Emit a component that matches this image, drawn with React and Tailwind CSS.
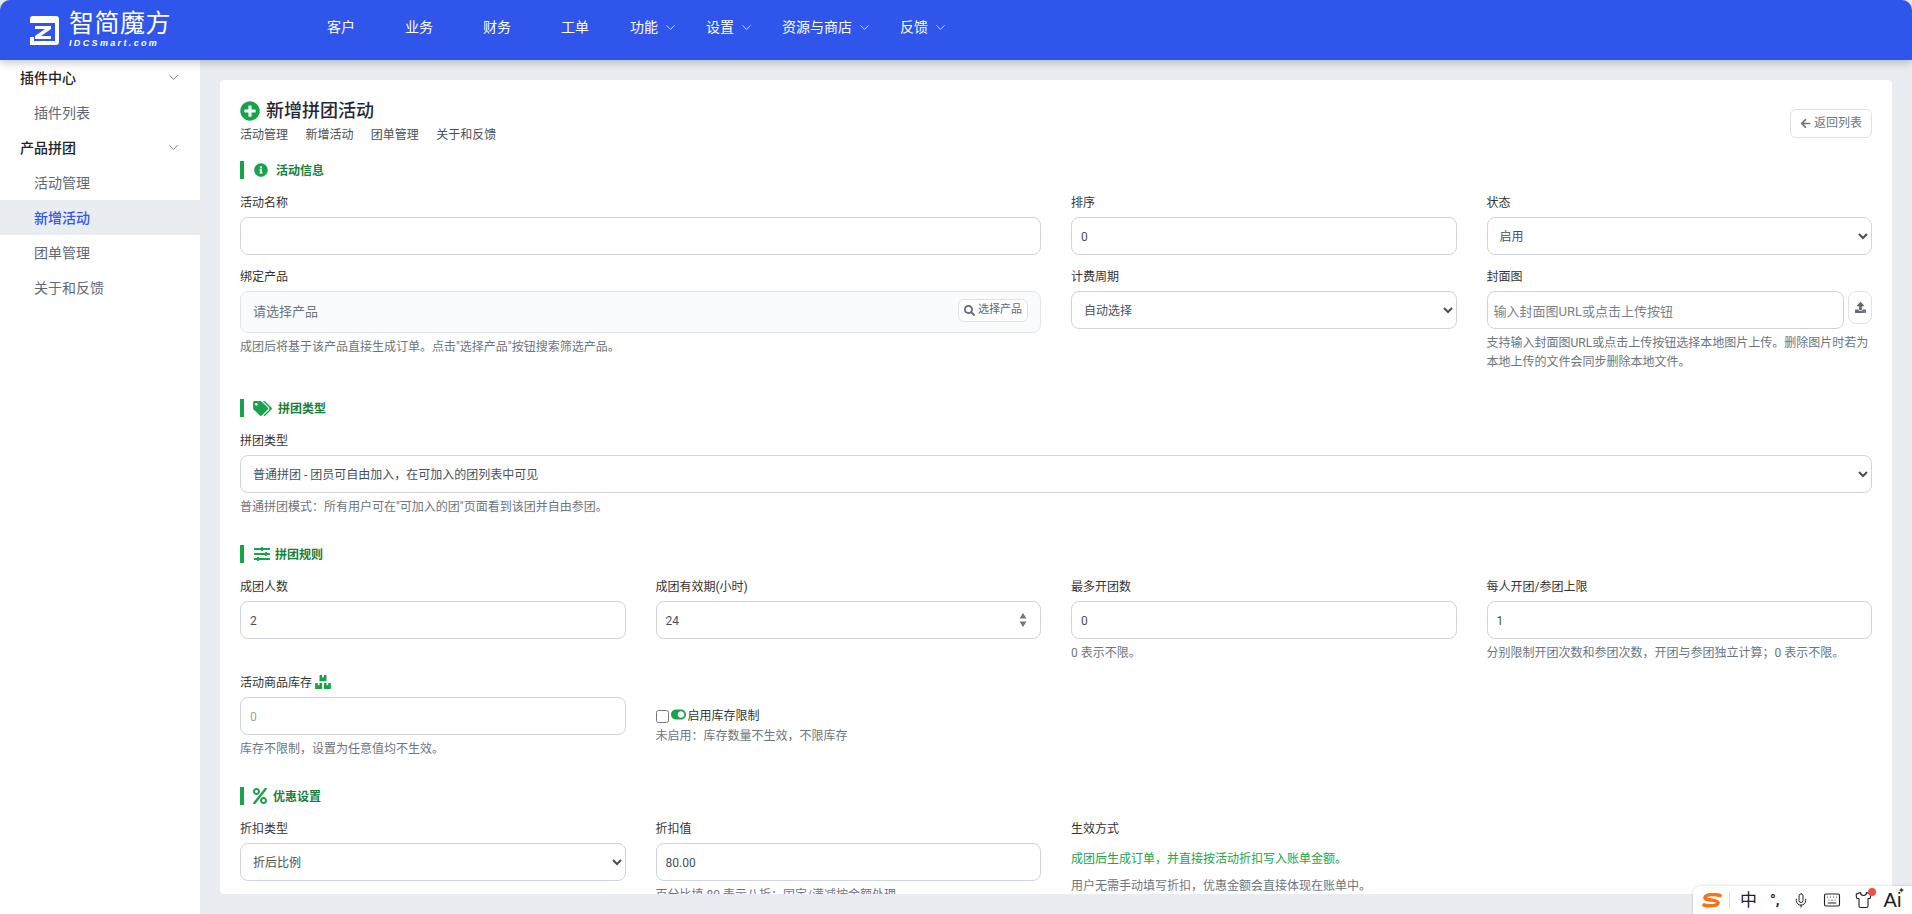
import React from "react";
import {
  FaPlusCircle,
  FaInfoCircle,
  FaTags,
  FaSlidersH,
  FaPercent,
  FaBoxes,
  FaToggleOn,
  FaSearch,
  FaArrowLeft,
  FaUpload,
} from "react-icons/fa";
import { ChevronDown, Mic, Keyboard, Shirt } from "lucide-react";

const inputCls =
  "block w-full h-[38px] rounded-[8px] border border-[#ced4da] bg-white px-[9px] pt-[2px] text-[12px] text-[#495057] outline-none placeholder:text-[#7b838a]";
const selectCls =
  "block w-full h-[38px] rounded-[8px] border border-[#ced4da] bg-white px-[8px] pt-[2px] text-[12px] text-[#495057] outline-none";

function Logo() {
  return (
    <div className="flex items-center w-[302px] pl-[30px] shrink-0">
      <svg width="29" height="29" viewBox="0 0 29 29">
        <rect width="29" height="29" rx="3" fill="#fff" />
        <path d="M0 7h25v18H4v-4h-4z" fill="#2f55eb" />
        <path d="M5 10h16v3L11 20h10v3H5v-3l10-7H5z" fill="#fff" />
        <path d="M0 21h4v8H0z" fill="#fff" />
      </svg>
      <div className="ml-[10px] text-white">
        <div className="text-[25px] leading-[24px] font-normal tracking-[0.5px]">智简魔方</div>
        <div className="text-[9px] leading-[10px] mt-[2px] font-bold italic tracking-[2.35px] font-['Liberation_Sans',sans-serif]">
          IDCSmart.com
        </div>
      </div>
    </div>
  );
}

function NavLink({ children }) {
  return <span className="px-[25px] text-[14px] text-white">{children}</span>;
}

function NavDrop({ children }) {
  return (
    <span className="flex items-center pl-[16px] pr-[12px] text-[14px] text-white">
      {children}
      <ChevronDown className="ml-[5px] w-[15px] h-[15px] text-white" strokeWidth={1.25} />
    </span>
  );
}

function Header() {
  return (
    <header className="relative z-10 flex items-center h-[60px] shrink-0 rounded-t-[10px] bg-[#2f55eb] shadow-[0_3px_8px_rgba(0,0,0,0.22)]">
      <Logo />
      <nav className="flex items-center -mt-[6px]">
        <NavLink>客户</NavLink>
        <NavLink>业务</NavLink>
        <NavLink>财务</NavLink>
        <NavLink>工单</NavLink>
        <NavDrop>功能</NavDrop>
        <NavDrop>设置</NavDrop>
        <NavDrop>资源与商店</NavDrop>
        <NavDrop>反馈</NavDrop>
      </nav>
    </header>
  );
}

function SideGroup({ children }) {
  return (
    <div className="flex items-center justify-between h-[35px] pl-[20px] pr-[19px] text-[14px] font-medium text-[#222]">
      <span className="pt-[2px]">{children}</span>
      <ChevronDown className="w-[15px] h-[15px] text-[#555]" strokeWidth={1.25} />
    </div>
  );
}

function SideItem({ children, active }) {
  if (active) {
    return (
      <div className="flex items-center h-[35px] pl-[34px] pt-[2px] text-[14px] font-medium bg-[#e9edf2] text-[#2f55eb]">
        {children}
      </div>
    );
  }
  return <div className="flex items-center h-[35px] pl-[34px] pt-[2px] text-[14px] text-[#5f6873]">{children}</div>;
}

function Sidebar() {
  return (
    <aside className="w-[200px] shrink-0 bg-white">
      <SideGroup>插件中心</SideGroup>
      <SideItem>插件列表</SideItem>
      <SideGroup>产品拼团</SideGroup>
      <SideItem>活动管理</SideItem>
      <SideItem active>新增活动</SideItem>
      <SideItem>团单管理</SideItem>
      <SideItem>关于和反馈</SideItem>
    </aside>
  );
}

function Section({ icon, gap, className, children }) {
  return (
    <div className={`flex items-center h-[18px] mb-[15px] border-l-4 border-[#16a34a] pl-[10px] text-[12px] font-bold text-[#15803d] ${className || ""}`}>
      <span className={`flex items-center text-[#16a34a] ${gap}`}>{icon}</span>
      <span className="pt-[2px]">{children}</span>
    </div>
  );
}

function Label({ children }) {
  return <label className="flex items-center gap-[3px] h-[18px] mb-[5px] text-[12px] leading-[18px] text-[#333]">{children}</label>;
}

function Hint({ children, className }) {
  return <p className={`mt-[5px] text-[12px] leading-[18px] text-[#6c757d] ${className || ""}`}>{children}</p>;
}

function ActivityInfo() {
  return (
    <div className="grid grid-cols-12 gap-x-[30px] gap-y-[13px]">
      <div className="col-span-6">
        <Label>活动名称</Label>
        <input className={inputCls} />
      </div>
      <div className="col-span-3">
        <Label>排序</Label>
        <input className={inputCls} defaultValue="0" />
      </div>
      <div className="col-span-3">
        <Label>状态</Label>
        <select className={selectCls}>
          <option>启用</option>
        </select>
      </div>
      <div className="col-span-6">
        <Label>绑定产品</Label>
        <div className="flex items-center justify-between h-[42px] rounded-[8px] border border-[#e3e7ec] bg-[#f9fbfd] pl-[12px] pr-[12px]">
          <span className="text-[13px] text-[#6c757d]">请选择产品</span>
          <button className="flex items-center gap-[3px] h-[23px] px-[5px] -mt-[4px] rounded-[6px] border border-[#dee2e6] bg-white text-[11px] text-[#5f6873]">
            <FaSearch className="w-[11px] h-[11px]" />
            选择产品
          </button>
        </div>
        <Hint>成团后将基于该产品直接生成订单。点击"选择产品"按钮搜索筛选产品。</Hint>
      </div>
      <div className="col-span-3">
        <Label>计费周期</Label>
        <select className={selectCls}>
          <option>自动选择</option>
        </select>
      </div>
      <div className="col-span-3">
        <Label>封面图</Label>
        <div className="flex items-start gap-[4px]">
          <input className="block flex-1 min-w-0 h-[38px] rounded-[8px] border border-[#ced4da] bg-white px-[6px] pt-[2px] text-[13px] outline-none placeholder:text-[#7b838a]" placeholder="输入封面图URL或点击上传按钮" />
          <button className="flex items-center justify-center w-[24px] h-[33px] rounded-[8px] border border-[#dee2e6] bg-white text-[#5f6873]">
            <FaUpload className="w-[11px] h-[11px]" />
          </button>
        </div>
        <Hint className="leading-[19px]">支持输入封面图URL或点击上传按钮选择本地图片上传。删除图片时若为本地上传的文件会同步删除本地文件。</Hint>
      </div>
    </div>
  );
}

function RuleFields() {
  return (
    <div className="grid grid-cols-12 gap-x-[30px] gap-y-[12px]">
      <div className="col-span-3">
        <Label>成团人数</Label>
        <input className={inputCls} defaultValue="2" />
      </div>
      <div className="col-span-3">
        <Label>成团有效期(小时)</Label>
        <div className="relative">
          <input className={inputCls} defaultValue="24" />
          <svg className="absolute right-[14px] top-[12px]" width="8" height="14" viewBox="0 0 8 14">
            <path d="M4 0l3.5 5.5h-7zM4 14L.5 8.500h7z" fill="#777" />
          </svg>
        </div>
      </div>
      <div className="col-span-3">
        <Label>最多开团数</Label>
        <input className={inputCls} defaultValue="0" />
        <Hint>0 表示不限。</Hint>
      </div>
      <div className="col-span-3">
        <Label>每人开团/参团上限</Label>
        <input className={inputCls} defaultValue="1" />
        <Hint>分别限制开团次数和参团次数，开团与参团独立计算；0 表示不限。</Hint>
      </div>
      <div className="col-span-3">
        <Label>
          活动商品库存
          <FaBoxes className="w-[16px] h-[14px] -mt-[3px] text-[#16a34a]" />
        </Label>
        <input className={`${inputCls} placeholder:text-[#9aa1a8]`} placeholder="0" />
        <Hint>库存不限制，设置为任意值均不生效。</Hint>
      </div>
      <div className="col-span-3 pt-[33px]">
        <div className="flex items-center h-[18px] text-[12px] text-[#333]">
          <input type="checkbox" className="w-[13px] h-[13px] mt-[1px]" />
          <FaToggleOn className="w-[15px] h-[15px] ml-[2px] mr-[2px] -mt-[3px] text-[#16a34a]" />
          启用库存限制
        </div>
        <p className="mt-[2px] text-[12px] leading-[18px] text-[#6c757d]">未启用：库存数量不生效，不限库存</p>
      </div>
    </div>
  );
}

function DiscountFields() {
  return (
    <div className="grid grid-cols-12 gap-x-[30px]">
      <div className="col-span-3">
        <Label>折扣类型</Label>
        <select className={selectCls}>
          <option>折后比例</option>
        </select>
      </div>
      <div className="col-span-3">
        <Label>折扣值</Label>
        <input className={inputCls} defaultValue="80.00" />
        <Hint>百分比填 80 表示八折；固定/满减按金额处理</Hint>
      </div>
      <div className="col-span-6">
        <Label>生效方式</Label>
        <p className="mt-[12px] text-[12px] leading-[18px] text-[#22a34a]">成团后生成订单，并直接按活动折扣写入账单金额。</p>
        <p className="mt-[9px] text-[12px] leading-[18px] text-[#6c757d]">用户无需手动填写折扣，优惠金额会直接体现在账单中。</p>
      </div>
    </div>
  );
}

function ImeBar() {
  return (
    <div className="absolute right-0 bottom-0 z-20 flex items-center h-[28px] w-[219px] pl-[9px] rounded-tl-[8px] bg-white text-[#222] shadow-[0_0_3px_rgba(0,0,0,0.2)]">
      <svg width="20" height="15" viewBox="0 0 20 15" className="shrink-0">
        <path d="M18 2.500C13 1 4 1 3 4.500 2 8 15 6 16 9.500 17 13 7 13.500 2 12" fill="none" stroke="#f97316" strokeWidth="3.500" strokeLinecap="round" />
      </svg>
      <span className="w-px h-[18px] ml-[7px] bg-[#ddd]" />
      <span className="ml-[10px] text-[17px] leading-none">中</span>
      <span className="ml-[13px] text-[15px] leading-none font-bold">°,</span>
      <Mic className="ml-[13px] w-[16px] h-[19px]" strokeWidth={1.5} />
      <Keyboard className="ml-[14px] w-[18px] h-[18px]" strokeWidth={1.5} />
      <span className="relative ml-[13px]">
        <Shirt className="w-[19px] h-[18px]" strokeWidth={1.5} />
        <span className="absolute -top-[3px] right-[-3px] w-[8px] h-[8px] rounded-full bg-[#f0523d]" />
      </span>
      <span className="relative ml-[11px] text-[20px] leading-none font-['Liberation_Sans',sans-serif]">
        Ai
        <span className="absolute -top-[3px] -right-[4px] text-[8px] leading-none">✦</span>
      </span>
    </div>
  );
}

export default function App() {
  return (
    <div className="relative flex flex-col h-screen overflow-hidden bg-[#e9edf2] font-['Roboto','Noto_Sans_CJK_SC',sans-serif]">
      <Header />
      <div className="flex flex-1 min-h-0">
        <Sidebar />
        <main className="flex-1 min-w-0 p-[20px]">
          <div className="h-full overflow-hidden rounded-[4px] bg-white px-[20px] pt-[20px]">
            <div className="flex items-center justify-between h-[46px] mb-[15px]">
              <div className="-mt-[2px]">
                <div className="flex items-center gap-[6px] h-[22px]">
                  <FaPlusCircle className="w-[20px] h-[20px] text-[#16a34a]" />
                  <h1 className="text-[18px] leading-[22px] font-medium text-[#1f2937]">新增拼团活动</h1>
                </div>
                <div className="flex gap-[17.4px] mt-[4px] text-[12px] leading-[18px] text-[#495057]">
                  <span>活动管理</span>
                  <span>新增活动</span>
                  <span>团单管理</span>
                  <span>关于和反馈</span>
                </div>
              </div>
              <button className="flex items-center gap-[3px] h-[29px] px-[9px] rounded-[6px] border border-[#dee2e6] bg-white text-[12px] text-[#6c757d]">
                <FaArrowLeft className="w-[11px] h-[11px]" />
                返回列表
              </button>
            </div>

            <Section icon={<FaInfoCircle className="w-[14px] h-[14px]" />} gap="mr-[8px]">活动信息</Section>
            <ActivityInfo />

            <Section icon={<FaTags className="w-[19px] h-[15px]" />} gap="mr-[6px] -ml-[1px]" className="mt-[27px]">拼团类型</Section>
            <Label>拼团类型</Label>
            <select className={selectCls}>
              <option>普通拼团 - 团员可自由加入，在可加入的团列表中可见</option>
            </select>
            <Hint>普通拼团模式：所有用户可在"可加入的团"页面看到该团并自由参团。</Hint>

            <Section icon={<FaSlidersH className="w-[16px] h-[16px]" />} gap="mr-[5px]" className="mt-[29px]">拼团规则</Section>
            <RuleFields />

            <Section icon={<FaPercent className="w-[14px] h-[16px]" />} gap="mr-[6px] -ml-[1px]" className="mt-[29px]">优惠设置</Section>
            <DiscountFields />
          </div>
        </main>
      </div>
      <ImeBar />
    </div>
  );
}
